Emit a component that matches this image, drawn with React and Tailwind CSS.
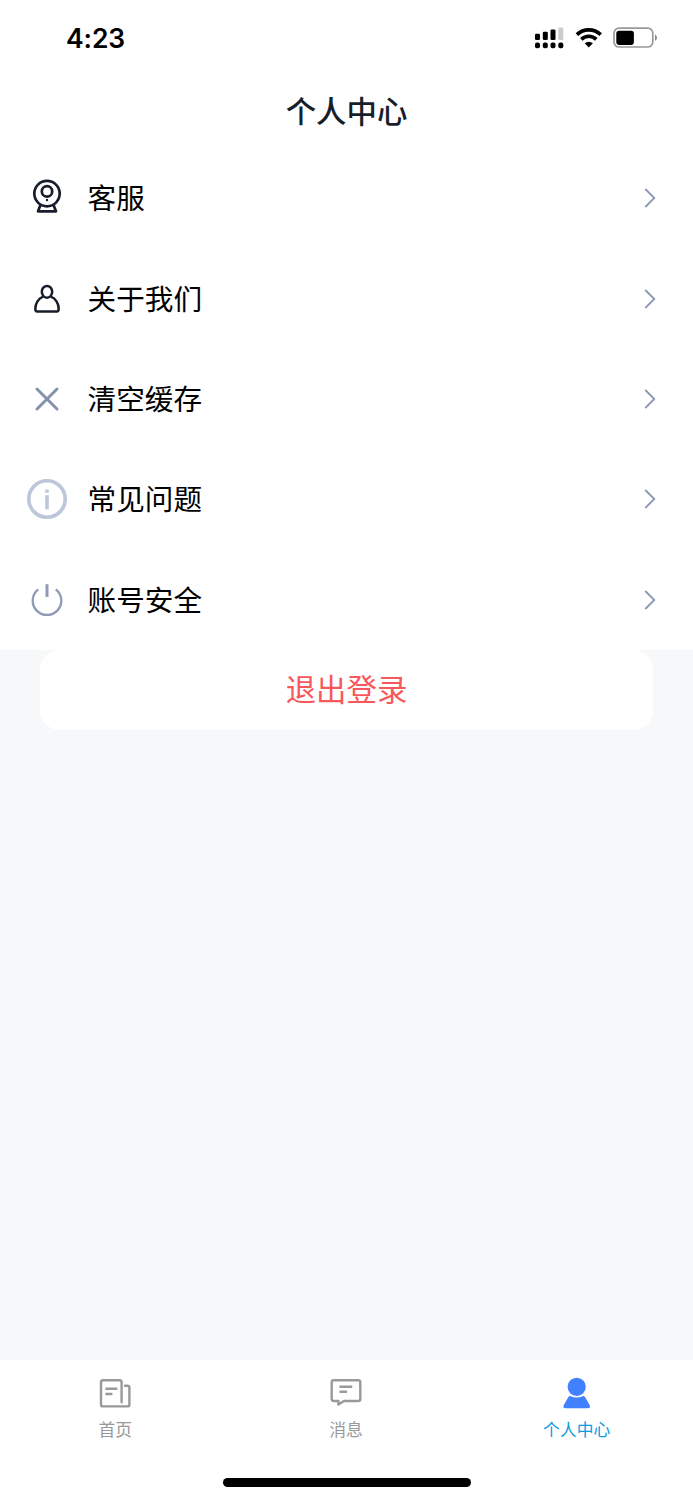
const menuItems = [
  { id: "service", label: "客服", Icon: ServiceIcon },
  { id: "about", label: "关于我们", Icon: AboutIcon },
  { id: "cache", label: "清空缓存", Icon: ClearIcon },
  { id: "faq", label: "常见问题", Icon: InfoIcon },
  { id: "security", label: "账号安全", Icon: PowerIcon },
];

const tabs = [
  { id: "home", label: "首页", Icon: HomeIcon },
  { id: "message", label: "消息", Icon: MessageIcon },
  { id: "profile", label: "个人中心", Icon: ProfileIcon, active: true },
];

function ServiceIcon() {
  return (
    <svg className="size-10" viewBox="0 0 40 40" fill="none" stroke="#171e2b" strokeWidth="2.7">
      <circle cx="20" cy="15.6" r="12.7" />
      <circle cx="20" cy="13.4" r="5.2" />
      <circle cx="20" cy="22" r="1.2" fill="#171e2b" stroke="none" />
      <path d="M13.4 27.2 L11 33.3 H29 L26.6 27.2" strokeLinejoin="round" />
    </svg>
  );
}

function AboutIcon() {
  return (
    <svg className="size-10" viewBox="0 0 40 40" fill="none" stroke="#171e2b" strokeWidth="2.5" strokeLinejoin="round">
      <ellipse cx="20" cy="12.8" rx="5.2" ry="5.9" />
      <path d="M16.2 17.6 C11.4 19.2 8.3 24.4 8.3 30 Q8.3 32.4 10.2 32.4 H29.8 Q31.7 32.4 31.7 30 C31.7 24.4 28.6 19.2 23.8 17.6" />
    </svg>
  );
}

function ClearIcon() {
  return (
    <svg className="size-10" viewBox="0 0 40 40" fill="none" stroke="#8592ae" strokeWidth="3" strokeLinecap="round">
      <path d="M10 10 L30 30 M30 10 L10 30" />
    </svg>
  );
}

function InfoIcon() {
  return (
    <svg className="size-10" viewBox="0 0 40 40" fill="none" stroke="#bdc6da" strokeWidth="3.6">
      <circle cx="20" cy="20" r="18.2" />
      <path d="M20 10.4 V13.8 M20 16.3 V30.3" />
    </svg>
  );
}

function PowerIcon() {
  return (
    <svg className="size-10" viewBox="0 0 40 40" fill="none" stroke="#8f9bb5" strokeWidth="2.3">
      <path d="M11.2 9.4 A14.3 14.3 0 1 0 28.8 9.4" />
      <path d="M20 4.2 V17" strokeWidth="3" />
    </svg>
  );
}

function HomeIcon() {
  return (
    <svg className="h-8 w-[34px]" viewBox="0 0 34 32" fill="none" stroke="#999" strokeWidth="2.4">
      <path d="M23.6 25.2 V5.2 Q23.6 3.2 21.6 3.2 H5 Q3 3.2 3 5.2 V27.4 Q3 29.4 5 29.4 H29.4 Q31.4 29.4 31.4 27.4 V10.8 Q31.4 8.8 29.4 8.8 H27" strokeLinecap="round" />
      <path d="M7.4 11.7 H19.4 M7.4 17 H14.4" />
    </svg>
  );
}

function MessageIcon() {
  return (
    <svg className="h-8 w-[34px]" viewBox="0 0 34 32" fill="none" stroke="#999" strokeWidth="2.4" strokeLinejoin="round">
      <path d="M4.7 3.2 H29.3 Q31.3 3.2 31.3 5.2 V22 Q31.3 24 29.3 24 H15 L9.4 27.6 V24 H4.7 Q2.7 24 2.7 22 V5.2 Q2.7 3.2 4.7 3.2 Z" />
      <path d="M10.5 9.7 H23.2 M10.5 14.8 H18" />
    </svg>
  );
}

function ProfileIcon() {
  return (
    <svg className="h-8 w-[34px]" viewBox="0 0 34 32" fill="#4180ff">
      <circle cx="16.7" cy="9.8" r="9.1" />
      <path d="M10.1 19 Q16.7 22.2 23.3 19 Q24.3 19 25 19.9 L29.6 28 Q31 31.3 27.8 31.3 H5.6 Q2.4 31.3 3.8 28 L8.4 19.9 Q9.1 19 10.1 19 Z" />
    </svg>
  );
}

function StatusIcons() {
  return (
    <svg className="h-6 w-[124px]" viewBox="0 0 124 24">
      {/* Dual sim signal */}
      <rect x="1" y="7.7" width="5" height="6.3" rx="1.3" />
      <rect x="8.8" y="5.8" width="5" height="8.2" rx="1.3" />
      <rect x="16.5" y="3.4" width="5" height="10.6" rx="1.3" />
      <rect x="24.3" y="1.6" width="5" height="12.4" rx="1.3" fill="#ccc" />
      <rect x="1" y="16.5" width="5" height="5.8" rx="2" />
      <rect x="8.8" y="16.5" width="5" height="5.8" rx="2" />
      <rect x="16.5" y="16.5" width="5" height="5.8" rx="2" />
      <rect x="24.3" y="16.5" width="5" height="5.8" rx="2" />
      {/* Wifi */}
      <g fill="none" stroke="#000" strokeWidth="3.7">
        <path d="M42.9 8.6 A17.2 17.2 0 0 1 66.7 8.6" />
        <path d="M47.3 13.3 A10.8 10.8 0 0 1 62.3 13.3" />
      </g>
      <path d="M50.7 17.3 Q54.8 14 58.9 17.3 L54.8 21.6 Z" />
      {/* Battery */}
      <rect x="80" y="2.2" width="38.8" height="18.8" rx="5" fill="none" stroke="#999" strokeWidth="1.7" />
      <rect x="82.3" y="4.7" width="17.6" height="14.2" rx="2.8" />
      <path d="M121 8.3 Q125 11.7 121 15.1 Z" fill="#888" />
    </svg>
  );
}

function MenuRow({ label, Icon }) {
  return (
    <button className="flex h-[100.4px] w-full items-center pr-[37px] pl-[27px]">
      <Icon />
      <span className="ml-[20.6px] pb-0.5 text-[28.6px] leading-10 text-black">{label}</span>
      <svg className="ml-auto h-5 w-3" viewBox="0 0 12 20" fill="none" stroke="#8c98b2" strokeWidth="1.8">
        <path d="M1.3 1 L10.3 10 L1.3 19" />
      </svg>
    </button>
  );
}

export default function App() {
  return (
    <div className="flex h-[1500px] w-[693px] flex-col bg-[#f7f8fa] font-['Noto_Sans_CJK_SC',sans-serif]">
      <div className="bg-white">
        <div className="flex h-[76px] items-center justify-between pr-[35px] pl-[66px]">
          <span className="pt-0.5 font-['Inter',sans-serif] text-[26.5px] font-semibold tracking-[-0.1px]">4:23</span>
          <StatusIcons />
        </div>
        <h1 className="flex h-[72px] items-center justify-center pb-[3px] text-[30.4px] font-medium text-[#171e2b]">
          个人中心
        </h1>
        {menuItems.map((item) => (
          <MenuRow key={item.id} label={item.label} Icon={item.Icon} />
        ))}
      </div>

      <button className="mx-10 h-20 rounded-[20px] bg-white pb-[3px] text-[30.4px] text-[#f7585b]">
        退出登录
      </button>

      <nav className="mt-auto flex h-[140px] flex-col bg-white">
        <div className="grid grid-cols-3 pr-px">
          {tabs.map(({ id, label, Icon, active }) => (
            <button key={id} className="flex flex-col items-center pt-[17px]">
              <Icon />
              <span
                className={`mt-2 text-[16.8px] leading-6 ${active ? "text-[#0c9be0]" : "text-[#999]"}`}
              >
                {label}
              </span>
            </button>
          ))}
        </div>
        {/* Home indicator */}
        <div className="mx-auto mt-auto mb-[13.5px] h-[8.5px] w-[248px] rounded-full bg-black" />
      </nav>
    </div>
  );
}
